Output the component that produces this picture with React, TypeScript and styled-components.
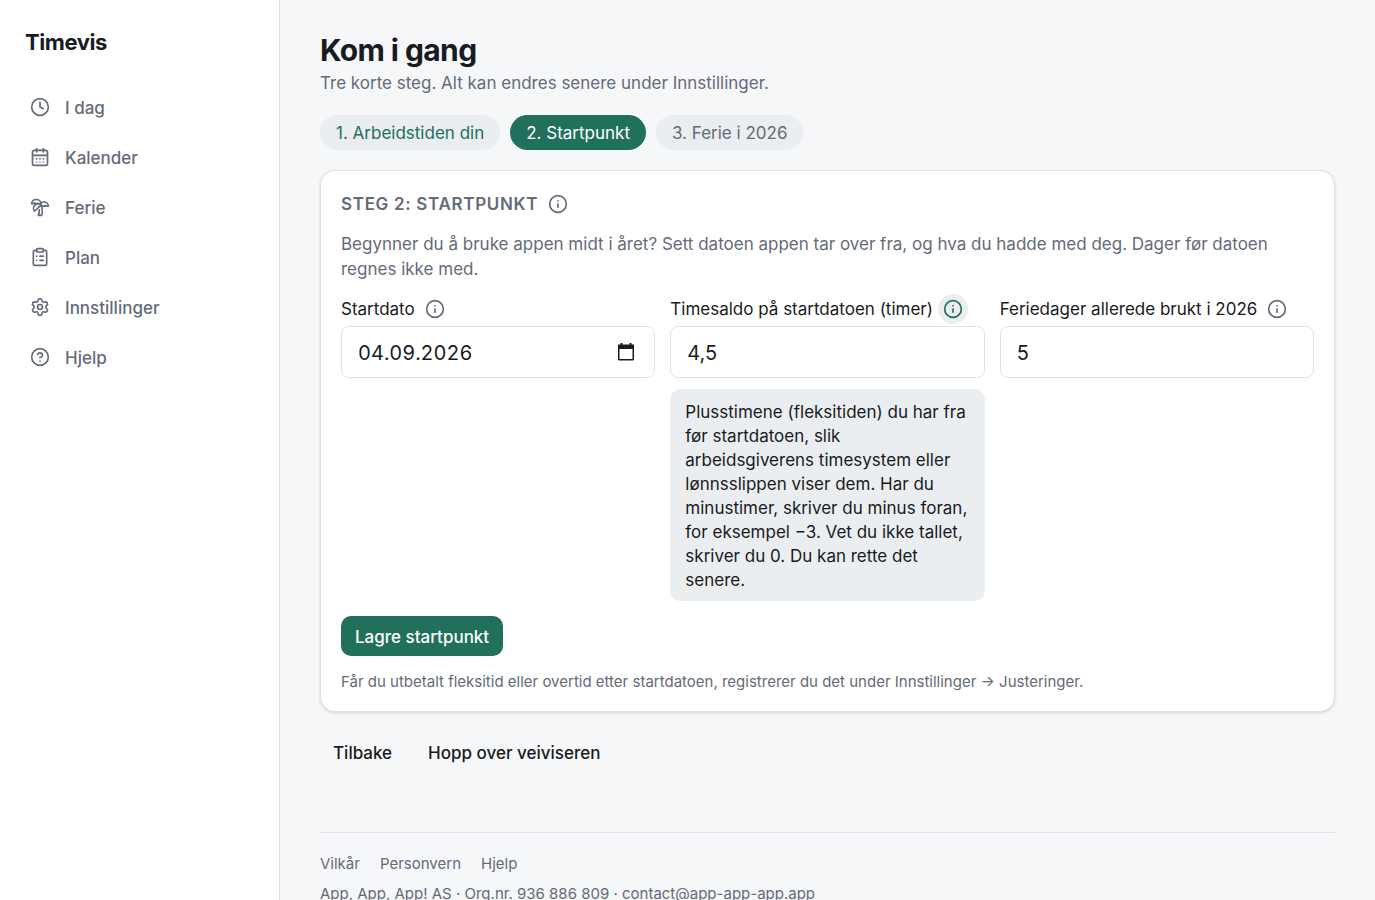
import React, { useState } from 'react';
import styled, { createGlobalStyle, css } from 'styled-components';
import {
  CalendarDays,
  CircleQuestionMark,
  ClipboardList,
  Clock,
  Info,
  Settings,
  TreePalm,
} from 'lucide-react';

const color = {
  text: '#181b22',
  muted: '#646b78',
  accent: '#20705c',
  page: '#f6f7f9',
  surface: '#ffffff',
  subtle: '#ebeef1',
  border: '#dfe2e7',
};

const GlobalStyle = createGlobalStyle`
  *, *::before, *::after { box-sizing: border-box; }
  html { scrollbar-width: none; }
  body {
    margin: 0;
    background: ${color.page};
    color: ${color.text};
    font-family: Inter, "Liberation Sans", sans-serif;
    font-size: 17px;
    line-height: 25px;
    -webkit-font-smoothing: antialiased;
  }
  h1, h2, p { margin: 0; }
  button, input { font: inherit; color: inherit; }
`;

const Shell = styled.div`
  display: flex;
  min-height: 100vh;
`;

const Sidebar = styled.aside`
  flex: 0 0 280px;
  padding: 25px 15px;
  background: ${color.surface};
  border-right: 1px solid ${color.border};
`;

const Brand = styled.div`
  padding: 0 10px;
  font-size: 22px;
  line-height: 34px;
  font-weight: 700;
  letter-spacing: -0.02em;
`;

const Nav = styled.nav`
  display: flex;
  flex-direction: column;
  gap: 6px;
  margin-top: 26px;
`;

const NavLink = styled.a`
  display: flex;
  align-items: center;
  gap: 15px;
  height: 44px;
  padding: 0 15px;
  border-radius: 10px;
  color: ${color.muted};
  font-weight: 500;
  text-decoration: none;
`;

const NavLabel = styled.span`
  padding-top: 2px;
`;

const Main = styled.main`
  flex: 1;
  min-width: 0;
  padding: 30px 40px;
`;

const PageTitle = styled.h1`
  font-size: 30px;
  line-height: 41px;
  font-weight: 650;
  letter-spacing: -0.02em;
`;

const Lead = styled.p`
  color: ${color.muted};
`;

const Steps = styled.ol`
  display: flex;
  flex-wrap: wrap;
  gap: 10px;
  margin: 19px 0 20px;
  padding: 0;
  list-style: none;
`;

const Step = styled.li<{ $state: 'done' | 'current' | 'next' }>`
  padding: 6px 16px 4px;
  border-radius: 18px;
  background: ${color.subtle};
  color: ${color.muted};
  ${({ $state }) => $state === 'done' && css`color: ${color.accent};`}
  ${({ $state }) =>
    $state === 'current' && css`background: ${color.accent}; color: #ffffff;`}
`;

const Card = styled.section`
  display: flex;
  flex-direction: column;
  padding: 20px 20px 19px;
  background: ${color.surface};
  border: 1px solid ${color.border};
  border-radius: 15px;
  box-shadow: 0 1px 3px rgba(24, 27, 34, 0.16);
`;

const CardHeader = styled.div`
  display: flex;
  align-items: center;
  gap: 5px;
  height: 25px;
`;

const CardTitle = styled.h2`
  padding-top: 2px;
  color: ${color.muted};
  font-size: 17px;
  line-height: 25px;
  font-weight: 600;
  letter-spacing: 0.04em;
  text-transform: uppercase;
`;

const CardText = styled.p`
  margin: 16px 0 14px;
  color: ${color.muted};
`;

const Fields = styled.div`
  display: grid;
  grid-template-columns: repeat(3, minmax(0, 1fr));
  gap: 15px;
  align-items: start;
`;

const Field = styled.div`
  display: flex;
  flex-direction: column;
`;

const FieldHead = styled.div`
  display: flex;
  align-items: center;
  gap: 5px;
  height: 25px;
  margin-bottom: 5px;
  white-space: nowrap;
`;

const FieldLabel = styled.label`
  padding-top: 2px;
`;

const InfoButton = styled.button<{ $open?: boolean }>`
  display: grid;
  place-items: center;
  flex: none;
  width: 30px;
  height: 30px;
  padding: 0;
  border: 0;
  border-radius: 50%;
  background: ${({ $open }) => ($open ? color.subtle : 'transparent')};
  color: ${({ $open }) => ($open ? color.accent : color.muted)};
  cursor: pointer;
`;

const InputBox = styled.div`
  display: flex;
  align-items: center;
  height: 52px;
  padding: 0 16px;
  background: ${color.surface};
  border: 1px solid ${color.border};
  border-radius: 8px;
`;

const TextInput = styled.input<{ $date?: boolean }>`
  flex: 1;
  min-width: 0;
  padding: 2px 0 0;
  border: 0;
  outline: 0;
  background: transparent;
  font-size: 20px;
  line-height: 30px;
  ${({ $date }) => $date && css`font-variant-numeric: tabular-nums;`}
`;

const PickerButton = styled.button`
  display: grid;
  place-items: center;
  width: 24px;
  height: 24px;
  padding: 0;
  border: 0;
  background: none;
`;

const HelpText = styled.p`
  margin-top: 11px;
  padding: 11px 15px 9px;
  border-radius: 10px;
  background: ${color.subtle};
  line-height: 24px;
`;

const Button = styled.button<{ $primary?: boolean }>`
  height: 40px;
  padding: 2px ${({ $primary }) => ($primary ? '14px' : '13px')} 0;
  border: 0;
  border-radius: 10px;
  background: ${({ $primary }) => ($primary ? color.accent : 'transparent')};
  color: ${({ $primary }) => ($primary ? '#ffffff' : color.text)};
  font-weight: 500;
  cursor: pointer;
`;

const FormActions = styled.div`
  display: flex;
  margin-top: 15px;
`;

const Note = styled.p`
  margin-top: 16px;
  color: ${color.muted};
  font-size: 15px;
  line-height: 20px;
`;

const WizardActions = styled.div`
  display: flex;
  gap: 10px;
  margin-top: 20px;
`;

const Footer = styled.footer`
  display: flex;
  flex-direction: column;
  gap: 10px;
  margin-top: 60px;
  padding: 21px 0 30px;
  border-top: 1px solid ${color.border};
  color: ${color.muted};
  font-size: 15px;
  line-height: 20px;
`;

const FooterLinks = styled.div`
  display: flex;
  gap: 20px;
`;

const FooterLink = styled.a`
  color: inherit;
  text-decoration: none;
`;

const navItems = [
  { label: 'I dag', Icon: Clock },
  { label: 'Kalender', Icon: CalendarDays },
  { label: 'Ferie', Icon: TreePalm },
  { label: 'Plan', Icon: ClipboardList },
  { label: 'Innstillinger', Icon: Settings },
  { label: 'Hjelp', Icon: CircleQuestionMark },
];

function InfoToggle({
  label,
  open,
  onClick,
}: {
  label: string;
  open?: boolean;
  onClick?: () => void;
}) {
  return (
    <InfoButton type="button" aria-label={label} aria-expanded={!!open} $open={open} onClick={onClick}>
      <Info size={20} strokeWidth={2} />
    </InfoButton>
  );
}

function PickerIcon() {
  return (
    <svg width="20" height="20" viewBox="0 0 20 20" fill="none" aria-hidden="true">
      <path d="M5.5 1v3M14.5 1v3" stroke="currentColor" strokeWidth="2" />
      <path d="M2 2.5h16V7H2z" fill="currentColor" />
      <rect x="2.75" y="3.75" width="14.5" height="14" rx="0.75" stroke="currentColor" strokeWidth="1.5" />
    </svg>
  );
}

export default function App() {
  const [date, setDate] = useState('04.09.2026');
  const [balance, setBalance] = useState('4,5');
  const [used, setUsed] = useState('5');
  const [helpOpen, setHelpOpen] = useState(true);

  return (
    <>
      <GlobalStyle />
      <Shell>
        <Sidebar>
          <Brand>Timevis</Brand>
          <Nav>
            {navItems.map(({ label, Icon }) => (
              <NavLink key={label} href="#">
                <Icon size={20} strokeWidth={2} aria-hidden="true" />
                <NavLabel>{label}</NavLabel>
              </NavLink>
            ))}
          </Nav>
        </Sidebar>

        <Main>
          <PageTitle>Kom i gang</PageTitle>
          <Lead>Tre korte steg. Alt kan endres senere under Innstillinger.</Lead>

          <Steps>
            <Step $state="done">1. Arbeidstiden din</Step>
            <Step $state="current" aria-current="step">2. Startpunkt</Step>
            <Step $state="next">3. Ferie i 2026</Step>
          </Steps>

          <Card>
            <CardHeader>
              <CardTitle>Steg 2: Startpunkt</CardTitle>
              <InfoToggle label="Om startpunkt" />
            </CardHeader>
            <CardText>
              Begynner du å bruke appen midt i året? Sett datoen appen tar over fra, og hva du hadde
              med deg. Dager før datoen regnes ikke med.
            </CardText>

            <Fields>
              <Field>
                <FieldHead>
                  <FieldLabel htmlFor="start-date">Startdato</FieldLabel>
                  <InfoToggle label="Om startdato" />
                </FieldHead>
                <InputBox>
                  <TextInput id="start-date" $date value={date} onChange={(e) => setDate(e.target.value)} />
                  <PickerButton type="button" aria-label="Velg dato">
                    <PickerIcon />
                  </PickerButton>
                </InputBox>
              </Field>

              <Field>
                <FieldHead>
                  <FieldLabel htmlFor="balance">Timesaldo på startdatoen (timer)</FieldLabel>
                  <InfoToggle label="Om timesaldo" open={helpOpen} onClick={() => setHelpOpen(!helpOpen)} />
                </FieldHead>
                <InputBox>
                  <TextInput id="balance" inputMode="decimal" value={balance} onChange={(e) => setBalance(e.target.value)} />
                </InputBox>
                {helpOpen && (
                  <HelpText>
                    Plusstimene (fleksitiden) du har fra før startdatoen, slik arbeidsgiverens
                    timesystem eller lønnsslippen viser dem. Har du minustimer, skriver du minus
                    foran, for eksempel −3. Vet du ikke tallet, skriver du 0. Du kan rette det
                    senere.
                  </HelpText>
                )}
              </Field>

              <Field>
                <FieldHead>
                  <FieldLabel htmlFor="used-days">Feriedager allerede brukt i 2026</FieldLabel>
                  <InfoToggle label="Om feriedager" />
                </FieldHead>
                <InputBox>
                  <TextInput id="used-days" inputMode="numeric" value={used} onChange={(e) => setUsed(e.target.value)} />
                </InputBox>
              </Field>
            </Fields>

            <FormActions>
              <Button type="button" $primary>Lagre startpunkt</Button>
            </FormActions>
            <Note>
              Får du utbetalt fleksitid eller overtid etter startdatoen, registrerer du det under
              Innstillinger → Justeringer.
            </Note>
          </Card>

          <WizardActions>
            <Button type="button">Tilbake</Button>
            <Button type="button">Hopp over veiviseren</Button>
          </WizardActions>

          <Footer>
            <FooterLinks>
              <FooterLink href="#">Vilkår</FooterLink>
              <FooterLink href="#">Personvern</FooterLink>
              <FooterLink href="#">Hjelp</FooterLink>
            </FooterLinks>
            <p>App, App, App! AS · Org.nr. 936 886 809 · contact@app-app-app.app</p>
          </Footer>
        </Main>
      </Shell>
    </>
  );
}
